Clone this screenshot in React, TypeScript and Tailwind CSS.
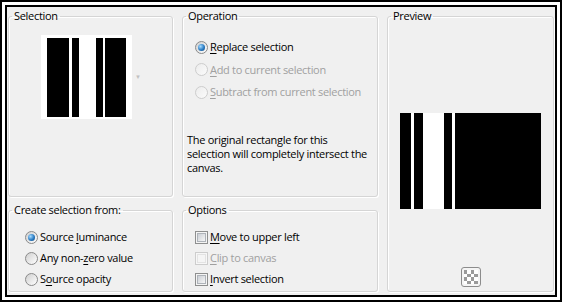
import type { ReactNode } from 'react'

// Radio estilo Windows 7
function Radio({ checked = false, disabled = false }: { checked?: boolean; disabled?: boolean }) {
  return (
    <span
      className={`flex items-center justify-center w-[13px] h-[13px] shrink-0 rounded-full border ${
        disabled
          ? 'border-[#cdcdcd] bg-[linear-gradient(135deg,#ececec,#fbfbfb)]'
          : 'border-[#8a8a8a] bg-[linear-gradient(135deg,#cfcfcf,#ffffff)]'
      }`}
    >
      {checked && (
        <span className="w-[7px] h-[7px] rounded-full bg-[radial-gradient(circle_at_35%_35%,#a8dcff,#2a7cc4_55%,#0d3f72)]" />
      )}
    </span>
  )
}

function Check({ disabled = false }: { disabled?: boolean }) {
  return (
    <span
      className={`flex items-center justify-center w-[13px] h-[13px] shrink-0 border ${
        disabled ? 'border-[#cdcdcd] bg-[#f7f7f7]' : 'border-[#8e8f8f] bg-[#f4f4f4]'
      }`}
    >
      <span
        className={`w-[9px] h-[9px] border ${
          disabled
            ? 'border-[#e3e3e3] bg-[#f5f5f5]'
            : 'border-[#aeb3b9] bg-[linear-gradient(135deg,#cbcfd5,#f6f6f6)]'
        }`}
      />
    </span>
  )
}

function Group({ title, className, children }: { title: string; className: string; children: ReactNode }) {
  return (
    <fieldset
      className={`rounded-[3px] border border-[#d5d5d5] shadow-[inset_1px_1px_0_#ffffff,1px_1px_0_#ffffff] ${className}`}
    >
      <legend className="ml-[3px] px-[2px] leading-[14px] text-black">{title}</legend>
      {children}
    </fieldset>
  )
}

function Row({ children, disabled, className }: { children: ReactNode; disabled?: boolean; className: string }) {
  return (
    <div className={`flex items-center gap-[2px] ${className} ${disabled ? 'text-[#a0a0a0]' : 'text-black'}`}>
      {children}
    </div>
  )
}

const U = ({ c }: { c: string }) => <span className="underline underline-offset-[2px]">{c}</span>

export default function App() {
  return (
    <div className="w-[562px] h-[302px] bg-white border-2 border-black p-[3px] font-['Segoe_UI','Open_Sans',sans-serif] text-[11px] tracking-[-0.3px]">
      <div className="w-full h-full border-2 border-black bg-[#f0f0f0] flex gap-[9px] pl-[1px] pt-[2px]">
        {/* Columna izquierda */}
        <div className="flex flex-col gap-[6px] w-[165px]">
          <Group title="Selection" className="h-[188px]">
            <div className="flex items-center gap-[3px] pl-[32px] pt-[12px]">
              <div className="flex w-[91px] h-[84px] bg-white pl-[6px] pt-[3px]">
                <div className="w-[22px] h-[79px] bg-black" />
                <div className="w-[7px] h-[79px] bg-black ml-[3px]" />
                <div className="w-[7px] h-[79px] bg-black ml-[17px]" />
                <div className="w-[21px] h-[79px] bg-black ml-[2px]" />
              </div>
              <span className="text-[6px] leading-none text-[#c0c0c0]">▼</span>
            </div>
          </Group>
          <Group title="Create selection from:" className="h-[89px]">
            <div className="pl-[16px] pt-[10px]">
              <Row className="h-[21px]">
                <Radio checked />
                <span>
                  Source <U c="l" />
                  uminance
                </span>
              </Row>
              <Row className="h-[21px]">
                <Radio />
                <span>
                  Any non-<U c="z" />
                  ero value
                </span>
              </Row>
              <Row className="h-[21px]">
                <Radio />
                <span>
                  S<U c="o" />
                  urce opacity
                </span>
              </Row>
            </div>
          </Group>
        </div>

        {/* Columna central */}
        <div className="flex flex-col gap-[6px] w-[196px]">
          <Group title="Operation" className="h-[188px]">
            <div className="pl-[12px] pt-[13px]">
              <Row className="h-[22.5px]">
                <Radio checked />
                <span>
                  <U c="R" />
                  eplace selection
                </span>
              </Row>
              <Row className="h-[22.5px]" disabled>
                <Radio disabled />
                <span>
                  <U c="A" />
                  dd to current selection
                </span>
              </Row>
              <Row className="h-[22.5px]" disabled>
                <Radio disabled />
                <span>
                  <U c="S" />
                  ubtract from current selection
                </span>
              </Row>
            </div>
            <p className="pl-[4px] mt-[29px] leading-[14px] text-black whitespace-nowrap">
              The original rectangle for this
              <br />
              selection will completely intersect the
              <br />
              canvas.
            </p>
          </Group>
          <Group title="Options" className="h-[89px]">
            <div className="pl-[12px] pt-[10px]">
              <Row className="h-[21px]">
                <Check />
                <span>
                  <U c="M" />
                  ove to upper left
                </span>
              </Row>
              <Row className="h-[21px]" disabled>
                <Check disabled />
                <span>
                  <U c="C" />
                  lip to canvas
                </span>
              </Row>
              <Row className="h-[21px]">
                <Check />
                <span>
                  <U c="I" />
                  nvert selection
                </span>
              </Row>
            </div>
          </Group>
        </div>

        {/* Columna derecha */}
        <div className="flex flex-col w-[167px]">
          <Group title="Preview" className="h-[283px]">
            <div className="flex flex-col items-center">
              <div className="self-start ml-[12px] mt-[90px] flex w-[141px] h-[96px] bg-white">
                <div className="w-[11px] h-full bg-black" />
                <div className="w-[9px] h-full bg-black ml-[3px]" />
                <div className="w-[8px] h-full bg-black ml-[21px]" />
                <div className="w-[86px] h-full bg-black ml-[3px]" />
              </div>
              <div className="mt-[58px] w-[20px] h-[20px] rounded-[3px] border border-[#8c8c8c] bg-[#f4f4f4] p-[2px]">
                <div className="grid grid-cols-4 w-[14px] h-[14px]">
                  {Array.from({ length: 16 }).map((_, i) => (
                    <div
                      key={i}
                      className={(Math.floor(i / 4) + (i % 4)) % 2 === 0 ? 'bg-[#9a9a9a]' : 'bg-[#ffffff]'}
                    />
                  ))}
                </div>
              </div>
            </div>
          </Group>
        </div>
      </div>
    </div>
  )
}
